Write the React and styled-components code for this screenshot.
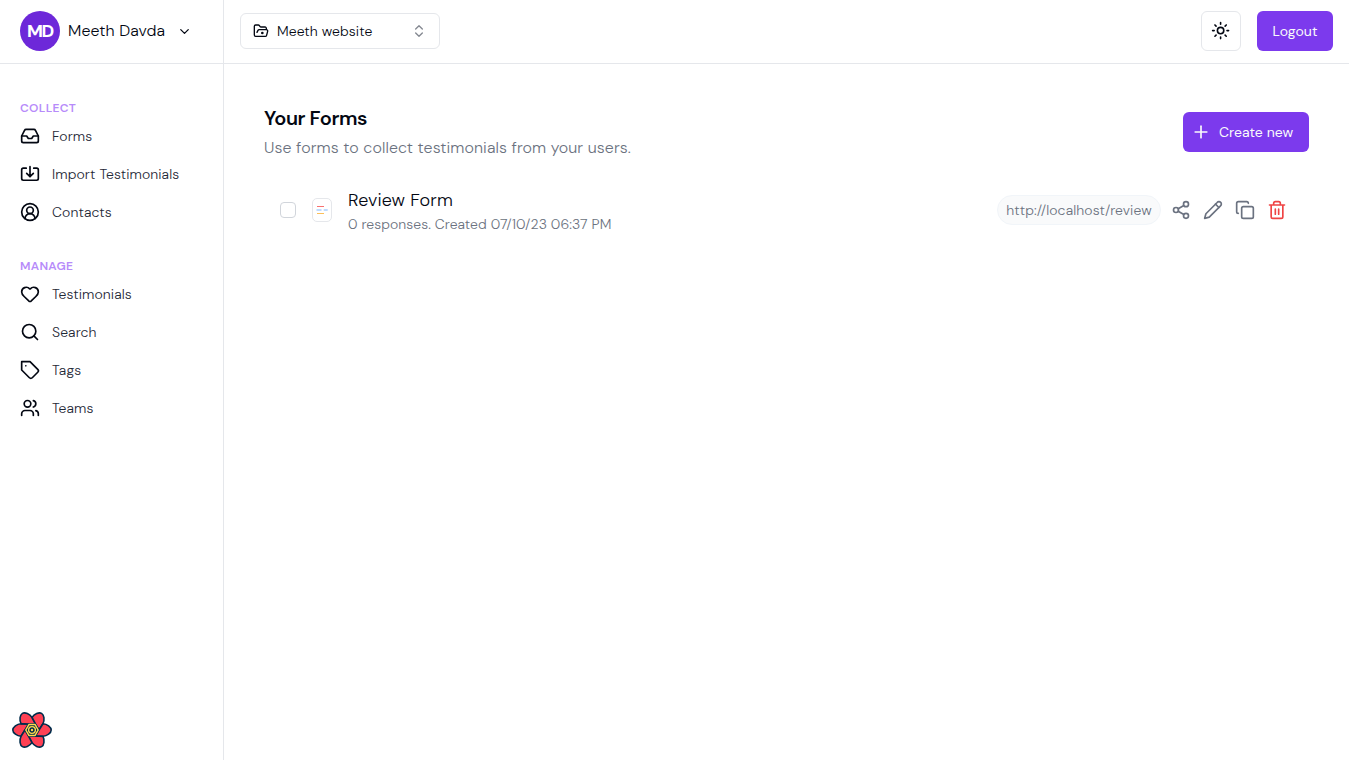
import React from "react";
import styled, { createGlobalStyle } from "styled-components";
import { Inbox, CircleUserRound, Heart, Search, Users, ChevronDown, ChevronsUpDown, Plus, Share2, Copy, FolderOpenDot } from "lucide-react";

const Global = createGlobalStyle`
  * { box-sizing: border-box; }
  body { margin: 0; background: #fff; color: #030712; font-family: "DM Sans", Inter, "Liberation Sans", sans-serif; }
  button { font: inherit; color: inherit; cursor: pointer; }
  h1, h2, h3, p { margin: 0; font-weight: 400; }
`;

const Text = styled.span`
  display: block;
  white-space: nowrap;
  font-size: ${(p) => p.$size || 14}px;
  line-height: ${(p) => p.$line || 20}px;
  font-weight: ${(p) => p.$weight || 300};
  letter-spacing: ${(p) => p.$track || 0}px;
  color: ${(p) => p.$color || "inherit"};
`;

const Shell = styled.div`
  display: flex;
  width: 100%;
  height: 100vh;
  overflow: hidden;
`;

const Sidebar = styled.aside`
  position: relative;
  width: 224px;
  flex: none;
  border-right: 1px solid #e5e7eb;
`;

const Account = styled.div`
  display: flex;
  align-items: center;
  height: 64px;
  padding: 0 20px 2px;
  border-bottom: 1px solid #e5e7eb;
  > svg { margin: 1px 0 0 12px; }
`;

const Avatar = styled.div`
  display: grid;
  place-items: center;
  width: 40px;
  height: 40px;
  margin-right: 8px;
  border-radius: 50%;
  background: #6d28d9;
`;

const Nav = styled.nav`
  padding: 36px 20px 0;
`;

const NavGroup = styled.section`
  margin-bottom: 36px;
`;

const NavItem = styled.a`
  display: flex;
  align-items: center;
  gap: 12px;
  height: 20px;
  margin: ${(p) => (p.$first ? "10px" : "18px")} 0 0;
`;

const DevtoolsButton = styled.button`
  position: absolute;
  left: 12px;
  bottom: 10px;
  width: 40px;
  height: 40px;
  padding: 0;
  border: 0;
  background: none;
  svg { display: block; }
`;

const Main = styled.main`
  flex: 1;
  min-width: 0;
`;

const Topbar = styled.header`
  display: flex;
  align-items: center;
  height: 64px;
  padding: 0 16px 2px;
  border-bottom: 1px solid #e5e7eb;
`;

const SitePicker = styled.button`
  display: flex;
  align-items: center;
  gap: 8px;
  width: 200px;
  height: 36px;
  padding: 0 12px;
  border: 1px solid #e5e7eb;
  border-radius: 6px;
  background: #fff;
  > svg:last-child { margin-left: auto; color: #848891; }
`;

const ThemeButton = styled.button`
  display: flex;
  align-items: center;
  justify-content: center;
  width: 40px;
  height: 40px;
  margin: 0 16px 0 auto;
  padding: 0 1px 0 0;
  border: 1px solid #e5e7eb;
  border-radius: 6px;
  background: #fff;
`;

const PrimaryButton = styled.button`
  display: flex;
  align-items: center;
  justify-content: ${(p) => (p.$wide ? "flex-start" : "center")};
  gap: 8px;
  width: ${(p) => (p.$wide ? 126 : 76)}px;
  height: 40px;
  padding: ${(p) => (p.$wide ? "0 8px" : "0")};
  border: 0;
  border-radius: 6px;
  background: #7c3aed;
  color: #f9fafb;
`;

const Content = styled.div`
  padding: 40px;
`;

const PageHead = styled.div`
  display: flex;
  align-items: center;
  justify-content: space-between;
  height: 56px;
`;

const Heading = styled.div`
  display: flex;
  flex-direction: column;
  gap: 4px;
`;

const FormRow = styled.div`
  display: flex;
  align-items: center;
  height: 68px;
  margin-top: 16px;
  padding: 0 22px 0 16px;
`;

const Checkbox = styled.span`
  width: 16px;
  height: 16px;
  border: 1px solid #d1d5db;
  border-radius: 4px;
`;

const FormThumb = styled.span`
  width: 20px;
  height: 24px;
  margin: 0 16px;
  border: 1px solid #e5e7eb;
  border-radius: 5px;
  svg { display: block; }
`;

const FormInfo = styled.div`
  display: flex;
  flex-direction: column;
`;

const Actions = styled.div`
  display: flex;
  align-items: center;
  gap: 12px;
  margin-left: auto;
  color: #6b7280;
`;

const UrlPill = styled.div`
  display: grid;
  place-items: center;
  width: 164px;
  height: 30px;
  margin-right: -2px;
  border: 1px solid #f1f5f9;
  border-radius: 15px;
  background: #f9fafb;
`;

const Glyph = ({ size = 20, width = 2, color = "currentColor", children }) => (
  <svg width={size} height={size} viewBox="0 0 24 24" fill="none" stroke={color} strokeWidth={width} strokeLinecap="round" strokeLinejoin="round">
    {children}
  </svg>
);

const ImportIcon = () => (
  <Glyph>
    <path d="M7.5 5H4a2 2 0 0 0-2 2v10.500a2 2 0 0 0 2 2h16a2 2 0 0 0 2-2V7a2 2 0 0 0-2-2h-3.500" />
    <path d="M12 3.200v12M8 11.200l4 4 4-4" />
  </Glyph>
);

const TagIcon = () => (
  <Glyph>
    <path d="M12 2H2v10l9.29 9.29c.94.94 2.48.94 3.42 0l6.58-6.58c.94-.94.94-2.48 0-3.42L12 2Z" />
    <path d="M7 7h.01" />
  </Glyph>
);

const SunIcon = () => (
  <Glyph size={19.2}>
    <circle cx="12" cy="12" r="4" />
    <path d="M12 2v2M12 20v2M4.93 4.93l1.41 1.41M17.66 17.66l1.41 1.41M2 12h2M20 12h2M6.34 17.66l-1.41 1.41M19.07 4.93l-1.41 1.41" />
  </Glyph>
);

const PencilIcon = () => (
  <Glyph>
    <path d="M17 3a2.85 2.83 0 1 1 4 4L7.5 20.5 2 22l1.5-5.5Z" />
    <path d="m15 5 4 4" />
  </Glyph>
);

const TrashIcon = () => (
  <Glyph color="#ef4444">
    <path d="M3 6h18M19 6v14a2 2 0 0 1-2 2H7a2 2 0 0 1-2-2V6M8 6V4a2 2 0 0 1 2-2h4a2 2 0 0 1 2 2v2M10 11v6M14 11v6" />
  </Glyph>
);

const FlowerLogo = () => (
  <svg width="40" height="40" viewBox="-20 -20 40 40">
    {[0, 60, 120, 180, 240, 300].map((a) => (
      <path key={a} transform={`rotate(${a})`} d="M-3.5 -6.1L-11 -6.300C-15 -6.100 -19.200 -3 -19.200 0C-19.200 3 -15 6.100 -11 6.300L-7 0Z" fill="#ff4154" stroke="#002c4b" strokeWidth="1.600" strokeLinejoin="round" />
    ))}
    <path d="M-3.800 -6.600H3.800L7.600 0L3.800 6.600H-3.800L-7.600 0Z" fill="#002c4b" />
    <path d="M-3.100 -5.400H3.100L6.200 0L3.100 5.400H-3.100L-6.200 0Z" fill="#002c4b" stroke="#ffd94c" strokeWidth="1.500" strokeLinejoin="round" />
    <circle r="3.400" fill="#002c4b" stroke="#ffd94c" strokeWidth="1.300" />
    <circle r="1.200" fill="#ffd94c" />
  </svg>
);

const groups = [
  { title: "COLLECT", items: [["Forms", Inbox], ["Import Testimonials", ImportIcon], ["Contacts", CircleUserRound]] },
  { title: "MANAGE", items: [["Testimonials", Heart], ["Search", Search], ["Tags", TagIcon], ["Teams", Users]] },
];

export default function App() {
  return (
    <Shell>
      <Global />
      <Sidebar>
        <Account>
          <Avatar><Text $size={18} $weight={700} $color="#fff" $track={-1.4}>MD</Text></Avatar>
          <Text $size={16} $track={0.12}>Meeth Davda</Text>
          <ChevronDown size={15} />
        </Account>
        <Nav>
          {groups.map((g) => (
            <NavGroup key={g.title}>
              <Text as="h3" $size={12} $line={16} $weight={600} $color="#b78bfa" $track={0.3}>{g.title}</Text>
              {g.items.map(([name, Icon], i) => (
                <NavItem key={name} $first={i === 0}>
                  <Icon size={20} />
                  <Text $color="#1f2937" $track={0.11}>{name}</Text>
                </NavItem>
              ))}
            </NavGroup>
          ))}
        </Nav>
        <DevtoolsButton aria-label="Devtools"><FlowerLogo /></DevtoolsButton>
      </Sidebar>
      <Main>
        <Topbar>
          <SitePicker>
            <FolderOpenDot size={16} />
            <Text $track={0.1}>Meeth website</Text>
            <ChevronsUpDown size={16} />
          </SitePicker>
          <ThemeButton aria-label="Theme"><SunIcon /></ThemeButton>
          <PrimaryButton><Text $weight={400} $track={0.08}>Logout</Text></PrimaryButton>
        </Topbar>
        <Content>
          <PageHead>
            <Heading>
              <Text as="h1" $size={20} $line={28} $weight={600} $track={-0.4}>Your Forms</Text>
              <Text as="p" $size={16} $line={24} $color="#6b7280" $track={0.1}>Use forms to collect testimonials from your users.</Text>
            </Heading>
            <PrimaryButton $wide><Plus size={20} /><Text $weight={400} $track={0.05}>Create new</Text></PrimaryButton>
          </PageHead>
          <FormRow>
            <Checkbox />
            <FormThumb>
              <svg width="18" height="22" viewBox="0 0 18 22">
                <path d="M4 7.5h7" stroke="#f87171" />
                <path d="M3.500 11h5M10.700 11h4" stroke="#bfdbfe" strokeWidth="2" />
                <path d="M4 14.5h7" stroke="#fbbf5a" />
              </svg>
            </FormThumb>
            <FormInfo>
              <Text as="h2" $size={18} $line={28} $track={0.12}>Review Form</Text>
              <Text as="p" $color="#6b7280" $track={0.07}>0 responses. Created 07/10/23 06:37 PM</Text>
            </FormInfo>
            <Actions>
              <UrlPill><Text $track={0.13}>http://localhost/review</Text></UrlPill>
              <Share2 size={20} />
              <PencilIcon />
              <Copy size={20} />
              <TrashIcon />
            </Actions>
          </FormRow>
        </Content>
      </Main>
    </Shell>
  );
}
